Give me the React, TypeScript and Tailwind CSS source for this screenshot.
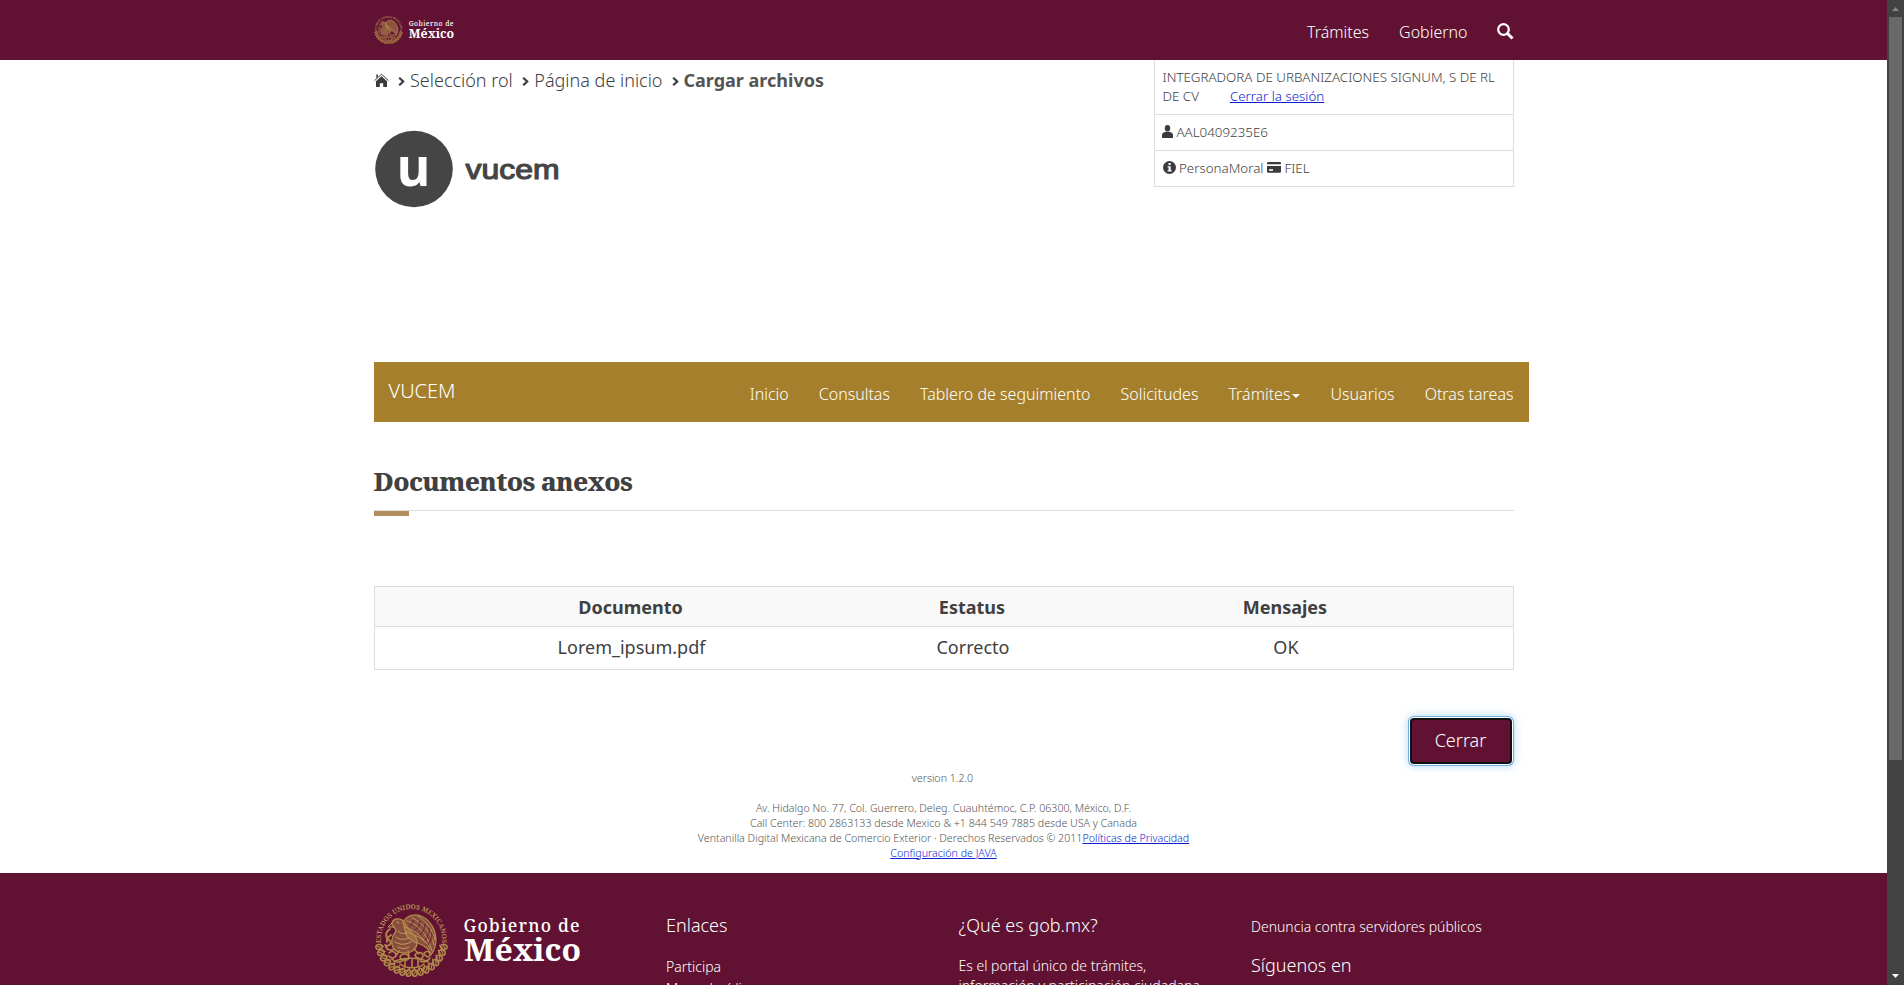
import type { ReactNode } from "react";

const NAV_ITEMS = ["Inicio", "Consultas", "Tablero de seguimiento", "Solicitudes", "Trámites", "Usuarios", "Otras tareas"];

const WREATH = Array.from({ length: 16 }, (_, i) => 12 + i * 10.4);

function GovernmentLogo({ id, className }: { id: string; className: string }) {
  return (
    <svg viewBox="0 0 208 76" className={className} role="img" aria-label="Gobierno de México">
      <defs>
        <path id={id} d="M8.5 47A30.500 30.500 0 1 1 66.500 47" />
      </defs>
      <g fill="none" stroke="#b08a4a" strokeLinecap="round" strokeLinejoin="round">
        <text fill="#c09a58" stroke="none" fontFamily="Noto Serif" fontWeight="600" fontSize="6.7" textAnchor="middle">
          <textPath href={`#${id}`} startOffset="50%">ESTADOS UNIDOS MEXICANOS</textPath>
        </text>
        {WREATH.map((a) => (
          <g key={a} transform={`rotate(${a} 37.5 38)`}>
            <ellipse cx="70.6" cy="38" rx="3.3" ry="2.5" strokeWidth="1.5" />
            <path d="M66 37.5l3 1.5M69 36l3 3" strokeWidth="1.2" />
          </g>
        ))}
        {/* Wing */}
        <path d="M29 20c4-7 13-9 20-5 8 4 13 14 13 23 0 6-2 11-5 15-2-6-6-9-11-11-7-2-12-5-14-10z" fill="#b08a4a" fillOpacity="0.5" strokeWidth="1.2" />
        <path d="M33 19c10 2 21 14 25 30M38 16c10 4 19 14 22 27M44 14c8 5 15 14 17 24M30 25c9 2 19 9 26 22M31 29c7 3 14 5 20 11" stroke="#c8a05c" strokeWidth="0.9" />
        <path d="M36 24c2-2 3-3 3-6M41 28c3-2 5-5 5-9M46 33c3-3 5-6 5-11M51 38c3-3 5-7 4-12M54 43c3-4 4-8 4-12" stroke="#611232" strokeWidth="0.8" />
        {/* Head and body */}
        <path d="M31 21c-4-6-13-5-13 1 0 3 4 3 4 7-4 5-6 12-2 18 5 5 15 5 20 1 4-4 4-11 0-15-3-3-6-5-9-12z" fill="#b08a4a" fillOpacity="0.5" strokeWidth="1.3" />
        <path d="M18 21l-4 4 6 0M23 20l2 1M24 29c3 3 6 3 9 2M22 35c4 3 8 3 13 1M21 40c5 3 10 3 16 0M24 45c4 2 7 2 11 0" stroke="#c8a05c" strokeWidth="1" />
        {/* Snake */}
        <path d="M16 27c-5 3-5 8-1 11 4 3 0 7-4 5M12 44c0 4 5 5 8 3M17 33c-3 2-5 4-4 7" strokeWidth="1.8" />
        {/* Cactus and rock */}
        <path d="M25 49l-3 5M34 49l1 5M40 47l5 5M15 51c3-3 7-1 7 2s-5 4-7 1M26 55c1-4 8-4 9 0s-8 4-9 0M41 53c2-4 8-3 8 1s-7 3-8-1M50 51c3-3 7-1 6 2s-5 2-6-2M20 60c7-5 27-5 34 0M18 57c3 3 7 4 10 2M46 59c4 2 8 0 10-3M31 58v6M38 57v8M44 58v6M26 62c6 5 18 5 24 0" strokeWidth="1.6" />
      </g>
      <g fill="#fff" fontFamily="Noto Serif">
        <text x="89.5" y="29.500" fontSize="17.5" fontWeight="500" textLength="116" lengthAdjust="spacing">Gobierno de</text>
        <text x="90" y="59" fontSize="31" fontWeight="700" textLength="117" lengthAdjust="spacingAndGlyphs">México</text>
      </g>
    </svg>
  );
}

function HomeIcon() {
  return (
    <svg viewBox="0 0 15 15" className="h-[15px] w-[15px]" fill="#393c3e">
      <path d="M7.5 3.300 13 8.300V14H9.2V10.300H5.8V14H2V8.300z" />
      <path d="M.6 7.600 7.5 1.200l6.900 6.400" fill="none" stroke="#393c3e" strokeWidth="1" />
      <path d="M2.300 1.500h1.600v2.200L2.300 5.300z" />
    </svg>
  );
}

function Chevron() {
  return (
    <svg viewBox="0 0 7 9" className="mt-[3px] h-[9px] w-[7px]" fill="none" stroke="#393c3e" strokeWidth="2.200">
      <path d="M1.200 .8l4 3.700-4 3.700" />
    </svg>
  );
}

function SearchIcon() {
  return (
    <svg viewBox="0 0 17 17" className="h-[17px] w-[17px]" fill="none" stroke="#fff">
      <circle cx="6.500" cy="6.500" r="5.300" strokeWidth="2.200" />
      <path d="M10.500 10.500l5 5" strokeWidth="3" />
    </svg>
  );
}

function UserIcon() {
  return (
    <svg viewBox="0 0 11 13" className="inline-block h-[13px] w-[11px] align-[-1px]" fill="#393c3e">
      <ellipse cx="5.500" cy="3.300" rx="2.700" ry="3.300" />
      <path d="M3.600 6.800h3.800c1.600.4 3.300 1.200 3.600 2.700V13H0V9.500c.3-1.500 2-2.300 3.600-2.700z" />
    </svg>
  );
}

function InfoIcon() {
  return (
    <svg viewBox="0 0 13 13" className="inline-block h-[13px] w-[13px] align-[-1px]">
      <circle cx="6.500" cy="6.500" r="6.500" fill="#393c3e" />
      <path d="M5.500 2h2.200v2H5.500zM4.600 5.200h3.100v4h1v1.300H4.600V9.200h1V6.500h-1z" fill="#fff" />
    </svg>
  );
}

function CardIcon() {
  return (
    <svg viewBox="0 0 14 11" className="inline-block h-[11px] w-[14px] align-[0px]">
      <path d="M.8 0h12.400l.8.800V2.300H0V.8zM0 4h14v6l-.8.800H.8L0 10z" fill="#393c3e" />
      <path d="M2 7.200h4v1.600H2z" fill="#fff" />
    </svg>
  );
}

function Crumb({ children }: { children: ReactNode }) {
  return <span className="flex items-center gap-[5px]"><Chevron />{children}</span>;
}

function ScrollBar() {
  return (
    <div className="flex w-[17px] shrink-0 flex-col items-center bg-[#424242]">
      <svg viewBox="0 0 7 4" className="mt-[7px] h-[4px] w-[7px]" fill="#868686"><path d="M3.500 0 7 4H0z" /></svg>
      <div className="mt-[6px] h-[743px] w-[13px] bg-[#686868]" />
      <svg viewBox="0 0 7 4" className="mt-[214px] h-[4px] w-[7px]" fill="#fff"><path d="M0 0h7L3.500 4z" /></svg>
    </div>
  );
}

export default function App() {
  return (
    <div className="flex h-[985px] overflow-hidden bg-white font-['Noto_Sans',sans-serif] font-light text-[#404041]">
      <div className="flex min-w-0 flex-1 flex-col">
        <header className="h-[60px] shrink-0 bg-[#611232]">
          <div className="mx-auto flex h-full w-[1140px] items-start justify-between text-white">
            <GovernmentLogo id="seal-top" className="mt-[14.500px] h-[29.500px] w-[80.500px]" />
            <nav className="flex text-base leading-[22px]">
              <a className="mt-[21px] mr-[30px]">Trámites</a>
              <a className="mt-[21px] mr-[29px]">Gobierno</a>
              <span className="mt-[22.500px]"><SearchIcon /></span>
            </nav>
          </div>
        </header>

        <main className="mx-auto h-[813px] w-[1140px] shrink-0">
          <div className="flex h-[302px] justify-between">
            <div>
              <div className="mt-[7px] flex h-[26px] items-center text-lg text-[#404041]">
                <HomeIcon />
                <span className="ml-[9.500px]"><Crumb>Selección rol</Crumb></span>
                <span className="ml-[9.500px]"><Crumb>Página de inicio</Crumb></span>
                <span className="ml-[9px]"><Crumb><span className="font-bold text-[#545454]">Cargar archivos</span></Crumb></span>
              </div>
              <svg viewBox="0 0 190 78" className="mt-[37px] h-[78px] w-[190px]">
                <ellipse cx="40" cy="39" rx="38.800" ry="38.200" fill="#454545" />
                <text x="22.500" y="56" fontSize="53" fontWeight="700" fontFamily="Open Sans" fill="#fff" textLength="34" lengthAdjust="spacingAndGlyphs">u</text>
                <text x="91.500" y="48.500" fontSize="28.500" fontWeight="400" fontFamily="Liberation Sans" fill="#454545" stroke="#454545" strokeWidth="1.200" strokeLinejoin="round" textLength="94" lengthAdjust="spacingAndGlyphs">vucem</text>
              </svg>
            </div>
            <div className="h-[127px] w-[360px] border-x border-[#ddd] text-[13.350px] leading-[19px]">
              <div className="border-b border-[#ddd] py-2 pr-1 pl-2">
                INTEGRADORA DE URBANIZACIONES SIGNUM, S DE RL
                <br />
                DE CV<a className="ml-[31px] text-[#0c1ecd] underline">Cerrar la sesión</a>
              </div>
              <div className="border-b border-[#ddd] py-2 pl-[7.500px]"><UserIcon /> AAL0409235E6</div>
              <div className="border-b border-[#ddd] py-2 pl-2"><InfoIcon /> PersonaMoral <CardIcon /> FIEL</div>
            </div>
          </div>

          <nav className="flex h-[60px] w-[1155px] items-start justify-between bg-[#a57f2c] px-[15px] text-white">
            <span className="mt-[14px] text-xl leading-[30px]">VUCEM</span>
            <div className="mt-[21px] flex gap-[30px] text-base leading-[22px]">
              {NAV_ITEMS.map((item) => (
                <a key={item} className="flex items-center">
                  {item}
                  {item === "Trámites" && <span className="mt-[3px] ml-[2px] border-x-4 border-t-4 border-x-transparent border-t-white" />}
                </a>
              ))}
            </div>
          </nav>

          <div className="mt-[38px] h-[51px] border-b border-[#dcdfdf] pt-[1px]">
            <h2 className="font-['Noto_Serif',serif] text-[26px] leading-[40px] font-extrabold tracking-[-0.65px] text-[#404041]">Documentos anexos</h2>
          </div>
          <div className="h-[5px] w-[35px] bg-[#b38e5d]" />

          <table className="mt-[70px] w-full table-fixed border-collapse border border-[#ddd] text-center text-lg leading-[26px]">
            <thead className="bg-[#f9f9f9] font-bold">
              <tr className="h-[40px] border-b border-[#ddd]">
                <th className="w-[45%]">Documento</th>
                <th className="w-[15%]">Estatus</th>
                <th className="w-[40%]">Mensajes</th>
              </tr>
            </thead>
            <tbody className="font-normal">
              <tr className="h-[43px]">
                <td className="pb-[3px] pl-[2px]">Lorem_ipsum.pdf</td>
                <td className="pb-[3px] pl-[2px]">Correcto</td>
                <td className="pb-[3px] pl-[2px]">OK</td>
              </tr>
            </tbody>
          </table>

          <div className="mt-[47.500px] flex justify-end pr-[2px]">
            <button className="h-[46px] w-[102px] rounded-[4px] border-2 border-[#101010] bg-[#611232] pb-[2px] text-lg leading-[26px] font-light text-white shadow-[0_0_0_1px_#fff,0_0_0_2px_#66afe9,0_0_8px_2px_rgba(102,175,233,0.5)]">Cerrar</button>
          </div>

          <div className="mt-[7px] text-center text-[10.650px] leading-[15px] text-[#545454]">
            <p className="pr-[2px]">version 1.2.0</p>
            <div className="mt-[15px]">
              <p>Av. Hidalgo No. 77, Col. Guerrero, Deleg. Cuauhtémoc, C.P. 06300, México, D.F.</p>
              <p>Call Center: 800 2863133 desde Mexico &amp; +1 844 549 7885 desde USA y Canada</p>
              <p>Ventanilla Digital Mexicana de Comercio Exterior · Derechos Reservados © 2011<a className="text-[#0c1ecd] underline">Políticas de Privacidad</a></p>
              <p><a className="text-[#0c1ecd] underline">Configuración de JAVA</a></p>
            </div>
          </div>
        </main>

        <footer className="h-[112px] shrink-0 overflow-hidden bg-[#611232] text-white">
          <div className="mx-auto grid w-[1170px] grid-cols-4 text-sm leading-[20px]">
            <div className="px-[15px]"><GovernmentLogo id="seal-bottom" className="mt-[29px] h-[76px] w-[208px]" /></div>
            <div className="px-[15px]">
              <h5 className="mt-[39px] text-lg leading-[26px]">Enlaces</h5>
              <p className="mt-[19px]">Participa</p>
              <p className="mt-[2px]">Marco Jurídico</p>
            </div>
            <div className="px-[15px]">
              <h5 className="mt-[39px] text-lg leading-[26px]">¿Qué es gob.mx?</h5>
              <p className="mt-[18px]">Es el portal único de trámites, información y participación ciudadana.</p>
            </div>
            <div className="px-[15px]">
              <p className="mt-[44px]">Denuncia contra servidores públicos</p>
              <h5 className="mt-[15px] text-lg leading-[26px]">Síguenos en</h5>
            </div>
          </div>
        </footer>
      </div>
      <ScrollBar />
    </div>
  );
}
